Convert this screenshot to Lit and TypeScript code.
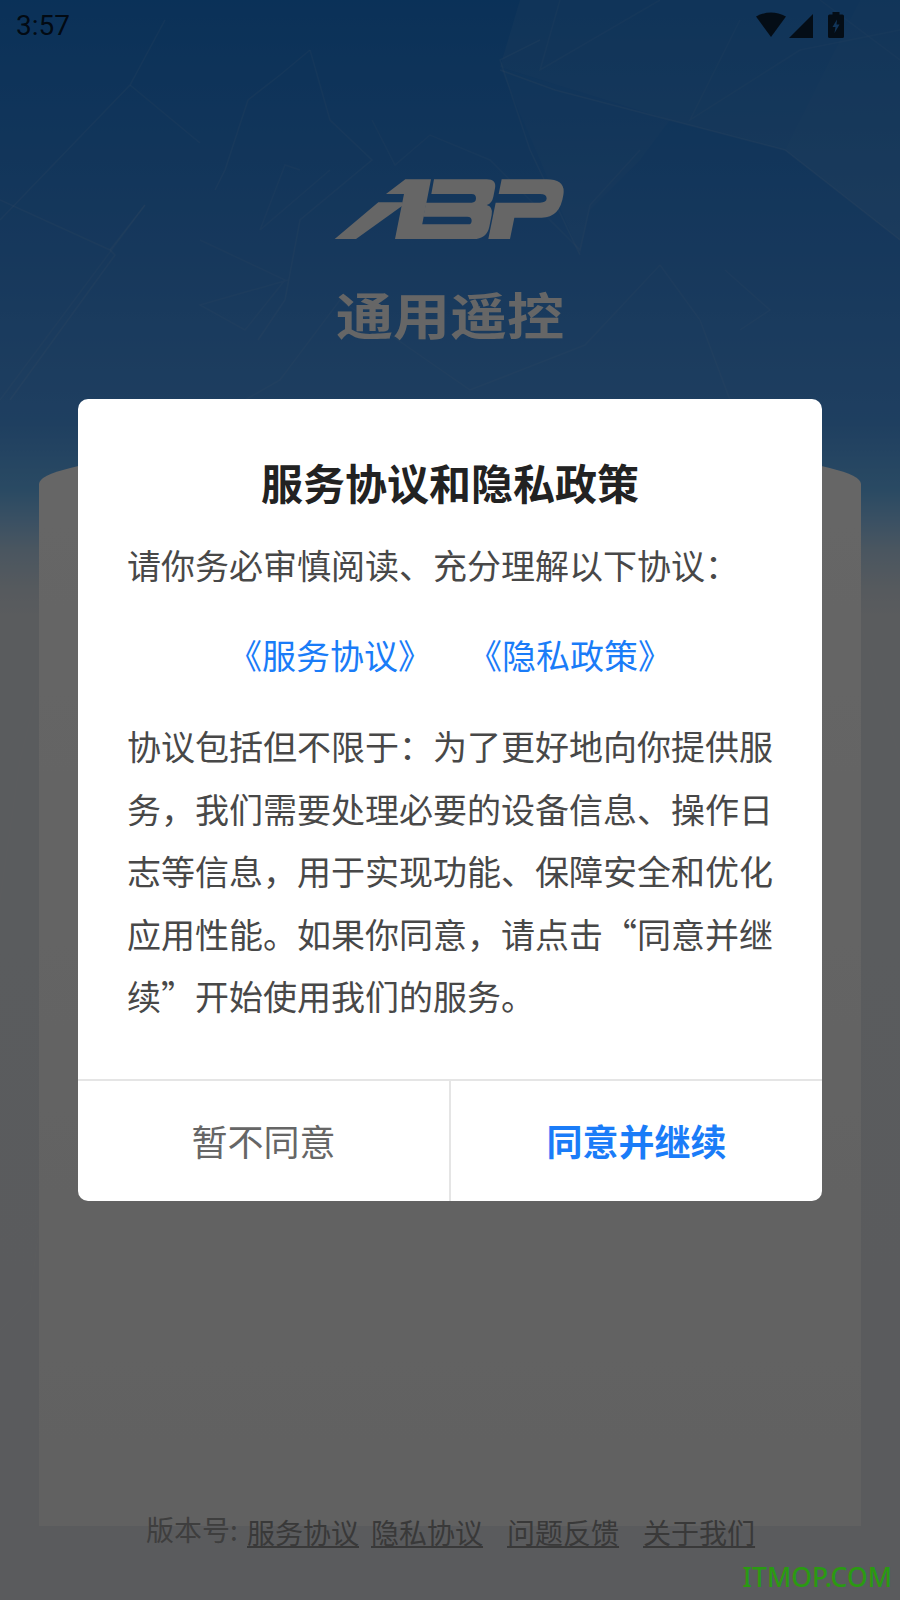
import { LitElement, html, css, svg } from "lit";
import { customElement } from "lit/decorators.js";

// faint crystal lines of the splash background, [points, opacity]
const LINES: [string, number][] = [
  ["165,20 130,85 0,220", 0.08],
  ["130,85 200,143", 0.07],
  ["310,50 280,75 248,100 225,170 215,190", 0.08],
  ["310,50 330,120 372,160 300,220 285,300 258,340", 0.07],
  ["300,170 285,165 260,230 330,170", 0.06],
  ["372,120 395,165 430,135 490,160 580,250 590,205 640,150", 0.06],
  ["0,200 110,250 115,255 10,400", 0.08],
  ["145,205 0,400", 0.06],
  ["110,250 145,205", 0.08],
  ["200,240 285,280 245,330 200,305 288,280", 0.06],
  ["660,265 585,345 470,390 340,300 280,380 245,400", 0.06],
  ["660,265 700,320 730,400", 0.06],
  ["725,270 770,310 740,330", 0.06],
  ["540,40 500,60 530,150 580,255", 0.08],
  ["500,70 555,90 670,120 785,150 900,240", 0.09],
  ["560,0 540,70 660,0", 0.06],
  ["740,20 690,120 800,50 900,30", 0.05],
  ["820,0 900,60", 0.05],
  ["60,600 20,760 0,900", 0.05],
  ["0,1240 40,1220 30,1300 0,1330", 0.04],
  ["860,620 900,760", 0.04],
  ["0,760 40,700 60,640", 0.04],
];

@customElement("app-root")
export class AppRoot extends LitElement {
  static styles = css`
    :host {
      display: block;
      position: relative;
      width: 900px;
      height: 1600px;
      overflow: hidden;
      font-family: "Noto Sans CJK SC", "Noto Sans", sans-serif;
    }

    .scene {
      display: flex;
      flex-direction: column;
      height: 1600px;
      box-sizing: border-box;
      background: linear-gradient(
        180deg,
        #1b7bdc 0,
        #3a8de6 260px,
        #4d9df0 420px,
        #69b9f8 490px,
        #91c8f8 520px,
        #b9d7f0 550px,
        #d7e1eb 590px,
        #e2e6eb 620px,
        #e2e3e8 100%
      );
    }

    .texture {
      position: absolute;
      inset: 0;
      width: 900px;
      height: 1600px;
    }

    .status {
      position: relative;
      display: flex;
      align-items: center;
      height: 50px;
      padding: 0 56px 0 16px;
    }

    .time {
      flex: 1;
      font-family: Roboto, sans-serif;
      font-size: 28px;
      color: rgba(0, 0, 0, 0.8);
    }

    .status svg {
      display: block;
      fill: rgba(0, 0, 0, 0.75);
    }

    .logo {
      position: relative;
      display: block;
      width: 240px;
      height: 80px;
      margin: 120px auto 0;
      fill: #fff;
    }

    .appname {
      position: relative;
      margin-top: 27px;
      text-align: center;
      font-size: 50px;
      line-height: 72px;
      font-weight: 700;
      color: #fff;
      transform: scaleX(1.14);
    }

    .card {
      position: relative;
      margin: 93px 39px 0;
      height: 1084px;
      background: linear-gradient(180deg, #ffffff, #f2f2f2);
      border-radius: 50% 50% 0 0 / 42px 42px 0 0;
    }

    .footer {
      position: relative;
      display: flex;
      margin: -14px 0 0 146px;
      font-size: 28px;
      line-height: 40px;
      color: #9c9c9c;
    }

    .footer .version {
      width: 101px;
      margin-top: -3px;
    }

    .footer a {
      color: #8e8e8e;
      text-decoration: underline;
      margin-right: 12px;
    }

    .footer a.wide {
      margin-right: 24px;
    }

    .scrim {
      position: absolute;
      inset: 0;
      display: flex;
      align-items: center;
      justify-content: center;
      background: rgba(0, 0, 0, 0.6);
    }

    .dialog {
      width: 744px;
      height: 802px;
      display: flex;
      flex-direction: column;
      background: #fff;
      border-radius: 10px;
      overflow: hidden;
    }

    .body {
      flex: 1;
      padding: 56px 49px 0;
    }

    .title {
      text-align: center;
      font-size: 42px;
      line-height: 54px;
      font-weight: 700;
      color: #222;
    }

    .lead {
      margin-top: 31px;
      font-size: 34px;
      line-height: 50px;
      color: #484848;
    }

    .links {
      display: flex;
      justify-content: center;
      gap: 36px;
      margin-top: 40px;
      font-size: 34px;
      line-height: 50px;
      color: #1a7cf8;
    }

    .desc {
      margin-top: 35px;
      font-size: 34px;
      line-height: 62.6px;
      color: #484848;
    }

    .actions {
      display: flex;
      height: 120px;
      border-top: 2px solid #e5e5e5;
    }

    .actions div {
      flex: 1;
      display: flex;
      align-items: center;
      justify-content: center;
      font-size: 36px;
      padding-bottom: 2px;
      color: #666;
    }

    .actions .ok {
      border-left: 2px solid #e5e5e5;
      font-size: 36px;
      font-weight: 700;
      color: #1a7cf8;
    }

    .watermark {
      position: absolute;
      right: 8px;
      bottom: 4px;
      font-family: "Noto Sans", sans-serif;
      font-size: 26.5px;
      font-weight: 500;
      line-height: 38px;
      color: #2a9a12;
    }
  `;

  render() {
    return html`
      <div class="scene">
        <svg class="texture" viewBox="0 0 900 1600">
          <polygon points="520,0 900,0 900,240 785,150 670,120 500,67" fill="#fff" opacity="0.06"></polygon>
          <polygon points="500,67 670,120 640,160 590,210 580,255 540,160" fill="#fff" opacity="0.03"></polygon>
          <polygon points="785,150 900,240 900,0 860,0" fill="#fff" opacity="0.02"></polygon>
          ${LINES.map(
            ([points, opacity]) => svg`<polyline points=${points} fill="none" stroke="#fff" stroke-width="1.5" opacity=${opacity}></polyline>`
          )}
        </svg>

        <div class="status">
          <span class="time">3:57</span>
          <svg width="30" height="26" viewBox="0 0 30 26">
            <path d="M0 4.5Q15 -3.5 30 4.5L15 25Z"></path>
          </svg>
          <svg width="24" height="24" viewBox="0 0 24 24" style="margin: 1px 15px 0 3px">
            <path d="M24 0V24H0Z"></path>
          </svg>
          <svg width="16" height="26" viewBox="0 0 16 26">
            <path d="M4.5 0H11.5V2.5H14.5Q16 2.5 16 4V24.5Q16 26 14.5 26H1.5Q0 26 0 24.5V4Q0 2.5 1.5 2.5H4.5ZM9 7.5 4.5 15H7.5L6.5 21 11.5 12.5H8.5Z" fill-rule="evenodd"></path>
          </svg>
        </div>

        <svg class="logo" viewBox="0 0 720 240">
          <path d="M226 28H303L268 207H195L222 72H168Z"></path>
          <path d="M14 207L145 97H218L216 108 78 207Z"></path>
          <path d="M312 28H470Q500 28 495 55L490 80Q486 100 470 105Q490 110 485 135L478 170Q470 207 430 207H262L270 163H415Q425 163 425 152Q425 140 412 140H280L288 98H425Q438 98 438 85Q438 72 425 72H304Z"></path>
          <path d="M515 28H650Q708 28 700 75Q690 143 635 143H553L540 207H475L497 98H630Q650 98 650 85Q650 72 630 72H506Z"></path>
        </svg>
        <div class="appname">通用遥控</div>

        <div class="card"></div>

        <div class="footer">
          <span class="version">版本号:</span>
          <a>服务协议</a>
          <a class="wide">隐私协议</a>
          <a class="wide">问题反馈</a>
          <a>关于我们</a>
        </div>
      </div>

      <div class="scrim">
        <div class="dialog">
          <div class="body">
            <div class="title">服务协议和隐私政策</div>
            <div class="lead">请你务必审慎阅读、充分理解以下协议：</div>
            <div class="links">
              <span>《服务协议》</span>
              <span>《隐私政策》</span>
            </div>
            <div class="desc">协议包括但不限于：为了更好地向你提供服务，我们需要处理必要的设备信息、操作日志等信息，用于实现功能、保障安全和优化应用性能。如果你同意，请点击“同意并继续”开始使用我们的服务。</div>
          </div>
          <div class="actions">
            <div>暂不同意</div>
            <div class="ok">同意并继续</div>
          </div>
        </div>
      </div>

      <div class="watermark">ITMOP.COM</div>
    `;
  }
}
